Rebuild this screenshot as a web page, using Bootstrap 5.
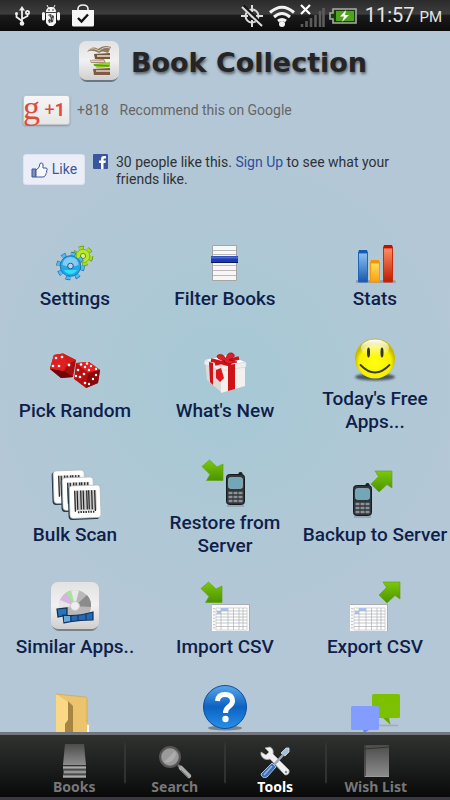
<!DOCTYPE html>
<html lang="en">
<head>
<meta charset="utf-8">
<meta name="viewport" content="width=device-width, initial-scale=1">
<title>Book Collection</title>
<link href="https://cdn.jsdelivr.net/npm/bootstrap@5.3.0/dist/css/bootstrap.min.css" rel="stylesheet">
<style>
  body { font-family: Roboto, "Liberation Sans", sans-serif; background: radial-gradient(circle at 50% 48%, #a6c8d5 0, #aec8d5 130px, #b4c7d6 250px); }
  svg { display: block; overflow: visible; flex: none; }
  .status-strip { height: 31px; padding: 0 8px 0 14px; background: linear-gradient(#2b2b2b 0, #3d3d3d 45%, #1b1b1b 50%, #0b0b0b 100%); color: #e6e6e6; }
  .notices { gap: 11px; }
  .status-time { font-size: 20px; line-height: 32px; }
  .status-time small { font-size: 15px; }
  .scroll-area { scrollbar-width: none; min-height: 0; }
  .scroll-area::-webkit-scrollbar { display: none; }
  .app-head { padding: 10px 4px 0 0; gap: 12px; }
  .app-title { padding-top: 4px; font: bold 27px/36px "DejaVu Sans", sans-serif; color: #252525; text-shadow: 1px 2px 3px #0008; }
  .social { padding: 14px 23px 0; font-size: 14px; line-height: 17px; }
  .plus-btn { width: 47px; height: 30px; border: 1px solid #c4c4c4; border-radius: 3px; background: linear-gradient(#f6f6f6, #e6e6e6); box-shadow: 0 1px 2px #0004; color: #dd4b39; font-size: 18px; line-height: 28px; }
  .plus-g { font-family: "Liberation Serif", serif; font-size: 34px; line-height: 24px; width: 19px; margin-left: -2px; }
  .grey-note { color: #666; margin-left: 7px; }
  .like-row { margin-top: 29px; gap: 8px; }
  .like-btn { width: 62px; height: 31px; border: 1px solid #dde2f0; border-radius: 3px; background: #eceef7; color: #3b5998; font-size: 14px; }
  .like-text { color: #2f3235; max-width: 282px; }
  .like-text a { color: #2f4f9c; }
  .tools-grid { margin-top: 56px; row-gap: 25px; }
  .tool { border: 0; background: none; padding: 0; gap: 5px; width: 100%; color: #0f1f4b; font-size: 19px; line-height: 23px; font-weight: 500; }
  .tabs-bar { padding: 0 25px; height: 68px; border-top: 3px solid #73777d; border-bottom: 3px solid #3b3842; background: linear-gradient(#303230, #1d1f1e 50%, #080908); }
  .tab { flex: 1 1 0; border: 0; background: none; padding: 10px 0 0; color: #777; font: bold 14px/18px "Noto Sans", sans-serif; }
  .tab + .tab { border-left: 2px solid; border-image: linear-gradient(transparent 10%, #353535 20%, #303030 75%, transparent 78%) 1; }
  .tab.active { color: #fff; }
</style>
<script src="https://cdn.jsdelivr.net/npm/bootstrap@5.3.0/dist/js/bootstrap.bundle.min.js"></script>
</head>
<body class="vh-100 d-flex flex-column overflow-hidden">

<svg width="0" height="0" class="position-absolute" aria-hidden="true">
  <defs>
    <linearGradient id="gGreen" x2="0" y2="1"><stop stop-color="#7cc80a"/><stop offset="1" stop-color="#4c9300"/></linearGradient>
    <linearGradient id="gTile" x2="0" y2="1"><stop stop-color="#e2e2e2"/><stop offset=".5" stop-color="#f1f1f1"/><stop offset="1" stop-color="#cfcfcf"/></linearGradient>
    <linearGradient id="gGrey" x2="0" y2="1"><stop stop-color="#4c4c4c"/><stop offset="1" stop-color="#8d8d8d"/></linearGradient>
    <g id="arrowDown"><path d="M0 6.500L7.500 0L15 7L21 4V20.500H4.500L8 14.500z" fill="url(#gGreen)" stroke="#5aa00c" stroke-width=".6"/></g>
    <g id="arrowUp"><path d="M4 0H21V17L16 13.500L8 21L0 13L7.500 5.500z" fill="url(#gGreen)" stroke="#5aa00c" stroke-width=".6"/></g>
    <g id="phone">
      <rect x="12.500" y="-1" width="4" height="6" rx="1.500" fill="#20262b"/>
      <rect x=".5" y="1.500" width="18" height="30" rx="3" fill="#30363a" stroke="#171b1e"/>
      <rect x="2.500" y="4.500" width="14" height="11" rx="2" fill="#71a7b7" stroke="#a3c5ce" stroke-width=".6"/>
      <path d="M2.500 20H16.500M2.500 24H16.500M2.500 28H16.500" stroke="#8b9398" stroke-width="2.600" stroke-dasharray="4 1"/>
      <path d="M1 33H18" stroke="#0003" stroke-width="1.500"/>
    </g>
    <g id="sheet">
      <path d="M0 0H38V27H0z" fill="#fafafa"/><path d="M0 .5H38M37.500 0V27" stroke="#a9adb0"/>
      <path d="M4 4H35V26H4z" fill="#fff" stroke="#b9bcc2" stroke-width=".6"/>
      <path d="M9 4H16V7H9zM5 7H9V10H5z" fill="#a3c4fa"/>
      <path d="M4 7H35M4 10H35M4 13H35M4 16H35M4 19H35M4 22.500H35M9 4V26M16 4V26M21.500 4V26M27 4V26M31 4V26" stroke="#b4b7bd" stroke-width=".8"/>
      <path d="M2 4V26" stroke="#999" stroke-dasharray="1.200 2"/>
    </g>
    <g id="barcode">
      <rect x="-1.500" y="1" width="31" height="33" rx="3.500" fill="#22394a"/>
      <rect width="31" height="32.500" rx="3" fill="#fff" stroke="#aeb4b8" stroke-width=".7"/>
      <path d="M5 5H27V25H5z" fill="#c9c9c9"/>
      <path d="M5.500 5V26M8 5V24M11.500 5V24M14 5V24M17.500 5V24M19.500 5V24M22.500 5V24M25.500 5V26" stroke="#202020" stroke-width="1.200"/>
      <path d="M8 26.500H25" stroke="#333" stroke-width="2" stroke-dasharray="1.500 1"/>
    </g>
  </defs>
</svg>

<header class="status-strip d-flex align-items-center flex-shrink-0">
  <div class="notices d-flex align-items-center">
    <svg width="16" height="20" viewBox="0 0 16 20" fill="none" stroke="#eee" stroke-width="1.800"><path d="M8 3V18M8 15L2.500 11V7M8 13L13.500 10V7"/><path d="M8 0L11 4.500H5z" fill="#eee" stroke="none"/><circle cx="8" cy="17.500" r="2.300" fill="#eee" stroke="none"/><circle cx="2.500" cy="7.500" r="1.500" fill="#eee" stroke="none"/><circle cx="13.500" cy="6.500" r="1.600"/></svg>
    <svg width="20" height="22" viewBox="0 0 20 22"><path d="M5 7C5 3.500 7 2 10 2S15 3.500 15 7zM5 8H15V18L12 21H8L5 18zM1 8.500a1.500 1.500 0 0 1 3 0V14a1.500 1.500 0 0 1-3 0zM16 8.500a1.500 1.500 0 0 1 3 0V14a1.500 1.500 0 0 1-3 0z" fill="#f4f4f4"/><path d="M6 0L7.500 3M14 0L12.500 3" stroke="#eee"/><circle cx="8" cy="5" r=".7"/><circle cx="12" cy="5" r=".7"/><path d="M7 10L9 9L13 11L12 17L8 18L7 15L10 13z" fill="#444"/><path d="M8 11H12M7 14H12M9 17H11" stroke="#ddd" stroke-dasharray="1 1"/></svg>
    <svg width="22" height="23" viewBox="0 0 22 23"><path d="M6 7V5Q6 1 11 1T16 5V7" fill="none" stroke="#eee" stroke-width="1.600"/><path d="M0 6H22V21Q22 22.500 20.500 22.500H1.500Q0 22.500 0 21z" fill="#f6f6f6"/><path d="M6 14L9.500 17.500L16 10.500" fill="none" stroke="#111" stroke-width="2.400"/></svg>
  </div>
  <svg class="ms-auto" width="24" height="24" viewBox="0 0 24 24" fill="none" stroke="#ddd" stroke-width="2"><circle cx="12" cy="12" r="6.500"/><circle cx="12" cy="12" r="1.500" fill="#ddd" stroke="none"/><path d="M12 1V8M12 16V23M1 12H8M16 12H23"/><path d="M3 2L23 22" stroke="#161616" stroke-width="4"/><path d="M2 3L22 22"/></svg>
  <svg class="ms-1" width="28" height="24" viewBox="0 0 28 24" fill="none" stroke="#f2f2f2" stroke-width="3"><path d="M2 8.500Q14-2 26 8.500M6 13Q14 6 22 13M10 17Q14 14 18 17"/><circle cx="14" cy="20" r="3" fill="#f2f2f2" stroke="none"/></svg>
  <svg class="ms-1" width="25" height="25" viewBox="0 0 25 25"><path d="M2 24V21M6.500 24V18M11 24V15M15.500 24V12M20 24V8M23.500 24V5" stroke="#5c5c5c" stroke-width="2.600"/><path d="M1 2L10 11M10 2L1 11" stroke="#fff" stroke-width="2.200"/></svg>
  <svg class="ms-1" width="28" height="16" viewBox="0 0 28 16"><path d="M4 1H27V15H4V11H1V5H4z" fill="#183d08" stroke="#aaa" stroke-width="1.600"/><path d="M7 3H25V13H7z" fill="#4fa41c"/><path d="M17 2L11 8.500H15L13 14L20 7H16z" fill="#fff"/></svg>
  <span class="status-time ms-2 text-nowrap">11:57 <small>PM</small></span>
</header>

<main class="scroll-area flex-grow-1 overflow-auto">
  <div class="app-head d-flex justify-content-center align-items-center">
    <svg width="40" height="40" viewBox="0 0 40 40"><rect x="1" y="2" width="38" height="39" rx="7" fill="#6b7780"/><rect width="40" height="39" rx="7" fill="url(#gTile)"/>
      <path d="M8 11Q13 4 19 8Q25 3 32 6L29 12Q23 9 20 12Q13 8 8 11z" fill="#8d7960"/><path d="M9 9Q14 6 20 10Q25 5 31 7" fill="none" stroke="#d9cbb5"/>
      <path d="M15 13L31 12V18L16 18z" fill="#75573e"/><path d="M18 14H31V16H18z" fill="#d3c0a6"/><path d="M11 19L25 18L27 22L12 22z" fill="#a98d78"/><path d="M12 19.500H25V21H12z" fill="#e2d2bf"/>
      <path d="M14 23L31 21V26L18 27z" fill="#8ed22a"/><path d="M15 24L30 25" stroke="#5d970d" stroke-width="1.500"/><path d="M14 28L31 27V34L15 34z" fill="#805a46"/><path d="M17 29H31V31H17z" fill="#cdb69c"/></svg>
    <h1 class="app-title mb-0">Book Collection</h1>
  </div>

  <section class="social">
    <div class="d-flex align-items-center">
      <button type="button" class="plus-btn d-flex p-0" aria-label="Google +1"><span class="plus-g">g</span><span class="ms-auto pe-1">+<b>1</b></span></button>
      <span class="grey-note">+818</span><span class="grey-note ps-1">Recommend this on Google</span>
    </div>
    <div class="like-row d-flex">
      <button type="button" class="like-btn d-flex align-items-center justify-content-center p-0 gap-1"><svg width="17" height="16" viewBox="0 0 17 16"><path d="M1 7H5V15H1z" fill="#7b8fbd" stroke="#3b5998"/><path d="M5 8Q9 6 9 1.500Q12 0 12 3V6H15.500Q17 7.500 15.500 9Q16.500 10.500 15 11.500Q15.500 13 14 13.500Q14 15 12 15H5z" fill="#f7f8fc" stroke="#3b5998"/></svg>Like</button>
      <svg width="15" height="15" viewBox="0 0 15 15"><rect width="15" height="15" rx="1" fill="#3b559f"/><path d="M8 15V9H6V6.500H8V5Q8 2 11 2H13V4.500H11.500Q10.500 4.500 10.500 5.500V6.500H13L12.500 9H10.500V15z" fill="#fff"/></svg>
      <p class="like-text m-0 flex-grow-1">30 people like this. <a href="#" class="text-decoration-none">Sign Up</a> to see what your friends like.</p>
    </div>
  </section>

  <section class="tools-grid row row-cols-3 gx-0 align-items-center">
    <div class="col pb-1"><button type="button" class="tool d-flex flex-column align-items-center">
      <svg width="48" height="38" viewBox="0 5 48 38"><g transform="translate(32 17)"><circle r="7.800" fill="none" stroke="#5d9418" stroke-width="5" stroke-dasharray="4.600 3.570"/><circle r="7.800" fill="none" stroke="#a9dc1f" stroke-width="3.600" stroke-dasharray="4 4.170"/><circle r="6.800" fill="#b8e62c" stroke="#7fb81c"/><circle r="2.600" fill="#d9f08a" stroke="#639a16"/></g>
      <g transform="translate(19.500 27)"><circle r="12" fill="none" stroke="#2170a5" stroke-width="4.500" stroke-dasharray="4.600 4.825"/><circle r="12" fill="none" stroke="#52b9ed" stroke-width="3.200" stroke-dasharray="4 5.425"/><circle r="10.300" fill="#25a6e8" stroke="#1c78b6"/><path d="M-8-1A8 8 0 0 1 8-1Q0 2-8-1z" fill="#a5d6f6" opacity=".75"/><path d="M-7 4Q0 12 7 4" fill="#2be0fa"/><circle r="2.800" fill="#bcd4df" stroke="#1d5e93"/></g></svg>
      <span>Settings</span></button></div>
    <div class="col pb-1"><button type="button" class="tool d-flex flex-column align-items-center">
      <svg width="48" height="38" viewBox="0 5 48 38"><path d="M11.500 6.500H35.500V41.500H11.500z" fill="#f7f7f7" stroke="#a5a5a5"/><path d="M12 11.500H35M12 15.500H35M12 26.500H35M12 31.500H35M12 36.500H35" stroke="#b9b9b9"/><path d="M10 17H37V24H10z" fill="#1d3bb0"/><path d="M10 18.500H37" stroke="#4a6ad0" stroke-width="2"/><path d="M10 23.500H37" stroke="#071769"/></svg>
      <span>Filter Books</span></button></div>
    <div class="col pb-1"><button type="button" class="tool d-flex flex-column align-items-center">
      <svg width="48" height="38" viewBox="0 5 48 38"><defs><linearGradient id="b1" x2="0" y2="1"><stop stop-color="#8bc2f2"/><stop offset="1" stop-color="#1a56ae"/></linearGradient><linearGradient id="b2" x2="0" y2="1"><stop stop-color="#ffdd60"/><stop offset="1" stop-color="#fc9d12"/></linearGradient><linearGradient id="b3" x2="0" y2="1"><stop stop-color="#fc8f68"/><stop offset="1" stop-color="#bd1c00"/></linearGradient></defs>
      <path d="M5 41H44L45 44H5z" fill="#74838f88"/><path d="M7.500 14H16.500V43H7.500z" fill="url(#b1)" stroke="#2264bb"/><path d="M8 11H16L17 14H7z" fill="#1659b2"/><path d="M19.500 24H28.500V43H19.500z" fill="url(#b2)" stroke="#f59a06"/><path d="M20 21H28L29 24H19z" fill="#f49400"/><path d="M32.500 9H41.500V43H32.500z" fill="url(#b3)" stroke="#cf2a08"/><path d="M33 6H41L42 9H32z" fill="#bd1300"/></svg>
      <span>Stats</span></button></div>

    <div class="col"><button type="button" class="tool d-flex flex-column align-items-center">
      <svg width="48" height="43" viewBox="0 1 48 43"><path d="M3 5L12 3.500L25 10L22 27L10 28L-1 19z" fill="#a50e0e"/><path d="M3 5L12 3.500L25 10L17 14L13 21L-1 19z" fill="#d71b1b"/><path d="M13 21L-1 19L10 28L22 27z" fill="#6f0505"/><path d="M3 5L12 4L16 13L12 21L-1 18z" fill="#e02020"/>
      <g fill="#fff"><circle cx="5" cy="8" r="1.300"/><circle cx="11" cy="7" r="1.300"/><circle cx="2" cy="16" r="1.300"/><circle cx="8" cy="16" r="1.300"/><circle cx="18" cy="15" r="1.400"/></g>
      <path d="M25 13L38 12L49 20L47 33L35 38L23 29z" fill="#b90f0f"/><path d="M25 13L38 12L49 20L37 23z" fill="#e52222"/><path d="M37 23L49 20L47 33L35 38z" fill="#8b0808"/>
      <g fill="#fff"><circle cx="30" cy="14.500" r="1.200"/><circle cx="36" cy="13.500" r="1.200"/><circle cx="34" cy="17" r="1.200"/><circle cx="40" cy="16" r="1.200"/><circle cx="38" cy="20" r="1.200"/><circle cx="45" cy="19" r="1.200"/><circle cx="27" cy="20" r="1.300"/><circle cx="33" cy="24" r="1.300"/><circle cx="29" cy="27" r="1.300"/><circle cx="25" cy="26" r="1.200"/><circle cx="34" cy="33" r="1.300"/><circle cx="45" cy="25" r="1.200"/><circle cx="42" cy="29" r="1.200"/><circle cx="38" cy="34" r="1.200"/></g></svg>
      <span>Pick Random</span></button></div>
    <div class="col"><button type="button" class="tool d-flex flex-column align-items-center">
      <svg width="48" height="43" viewBox="0 -1 48 43"><path d="M4 8L20 14V40L6 28z" fill="#dedad8"/><path d="M20 14L44 10V34L20 41z" fill="#f3f0ee"/><path d="M4 8L27 3L44 10L20 15z" fill="#fff"/><path d="M4 8L20 14V19L3 12zM20 14L45 10V15L20 19z" fill="#eee" stroke="#ccc" stroke-width=".5"/>
      <path d="M8 10L12 11V33L9 30zM27 13L34 12V37L27 39z" fill="#d01218"/><path d="M10 8L30 13M38 6L14 12" stroke="#d01218" stroke-width="3.500"/><path d="M24 9Q13 6 17 3Q22 1 25 7Q26 0 31 1Q37 4 28 8L36 10L28 12L23 10z" fill="#e02026" stroke="#8f080c" stroke-width=".7"/><path d="M15 18L20 16L23 26L19 30L15 26z" fill="#df171d"/></svg>
      <span>What's New</span></button></div>
    <div class="col"><button type="button" class="tool d-flex flex-column align-items-center">
      <svg width="48" height="43" viewBox="0 1 48 43"><defs><radialGradient id="smile" cy=".6"><stop stop-color="#ffff10"/><stop offset=".8" stop-color="#f8f000"/><stop offset="1" stop-color="#c9bb00"/></radialGradient><linearGradient id="shine" x2="0" y2="1"><stop stop-color="#fff"/><stop offset="1" stop-color="#fff0"/></linearGradient><filter id="soft"><feGaussianBlur stdDeviation="1.200"/></filter></defs>
      <ellipse cx="24" cy="39" rx="20" ry="3.500" fill="#4a5660" filter="url(#soft)"/><circle cx="24" cy="20.500" r="20" fill="url(#smile)"/><ellipse cx="24" cy="10" rx="14" ry="8.500" fill="url(#shine)"/><ellipse cx="17.500" cy="14.500" rx="1.500" ry="5" fill="#333"/><ellipse cx="31" cy="14.500" rx="1.500" ry="5" fill="#333"/><path d="M9.500 27Q24 42 38.500 27" fill="none" stroke="#3a3a22" stroke-width="1.800" stroke-linecap="round"/></svg>
      <span>Today's Free Apps...</span></button></div>

    <div class="col"><button type="button" class="tool d-flex flex-column align-items-center">
      <svg width="48" height="48" viewBox="0 -2 48 48"><use href="#barcode" transform="translate(2 -1) rotate(-2)"/><use href="#barcode" transform="translate(11 6) rotate(-2)"/><use href="#barcode" transform="translate(18 14) rotate(-2)"/></svg>
      <span>Bulk Scan</span></button></div>
    <div class="col"><button type="button" class="tool d-flex flex-column align-items-center">
      <svg width="48" height="48" viewBox="0 -2 48 48"><use href="#arrowDown" x="1"/><use href="#phone" x="25" y="13"/></svg>
      <span>Restore from Server</span></button></div>
    <div class="col"><button type="button" class="tool d-flex flex-column align-items-center">
      <svg width="48" height="48" viewBox="0 -2 48 48"><use href="#phone" x="2" y="12"/><use href="#arrowUp" x="20" y="-1"/></svg>
      <span class="text-nowrap">Backup to Server</span></button></div>

    <div class="col"><button type="button" class="tool d-flex flex-column align-items-center">
      <svg width="48" height="48" viewBox="0 0 48 48"><rect x="1" y="2" width="46" height="47" rx="7" fill="#77828a"/><rect width="48" height="47" rx="7" fill="url(#gTile)"/><circle cx="24" cy="24" r="16" fill="#b8b8b8"/><path d="M24 24L9 18A16 16 0 0 1 15 11z" fill="#d8b5e0"/><path d="M24 24L15 11A16 16 0 0 1 20 8.500z" fill="#a8e39a"/><path d="M24 24L20 8.500A16 16 0 0 1 28 8.500z" fill="#e8e8e8"/><path d="M24 24L36 13A16 16 0 0 1 40 25z" fill="#8b8b8b"/><path d="M24 24L8 26A16 16 0 0 1 9 18z" fill="#e6e6e6"/><circle cx="24" cy="24" r="4.500" fill="#eee" stroke="#ccc"/>
      <path d="M6 27L16 26V33L7 35z" fill="#2775b8" stroke="#102c50" stroke-width="1.200"/><path d="M12 33Q25 35 42 30V38Q25 38 13 41z" fill="#2469b5" stroke="#10315c" stroke-width="1.200"/><path d="M20 34V40M27 33V39M35 32V38" stroke="#10315c"/><path d="M13 34H19V39L13 40z" fill="#65a9dc"/></svg>
      <span>Similar Apps..</span></button></div>
    <div class="col"><button type="button" class="tool d-flex flex-column align-items-center">
      <svg width="48" height="48" viewBox="0 0 48 48"><use href="#arrowDown"/><use href="#sheet" x="11" y="22"/></svg>
      <span>Import CSV</span></button></div>
    <div class="col"><button type="button" class="tool d-flex flex-column align-items-center">
      <svg width="48" height="48" viewBox="0 0 48 48"><use href="#arrowUp" x="28"/><use href="#sheet" x="-1" y="22"/></svg>
      <span>Export CSV</span></button></div>

    <div class="col"><button type="button" class="tool d-flex flex-column align-items-center">
      <svg width="48" height="48" viewBox="0 1 48 48"><path d="M5 12L34 15Q36 15 36 17V41L39 42V50H5z" fill="#ebc46d"/><path d="M5 12L17 20V38L14 42V52H5z" fill="#f9d985"/><path d="M17 19L22 24V50H14V42L17 38z" fill="#a88443"/><path d="M36 43H38V50H36z" fill="#fff"/><path d="M5 12L34 15Q36 15 36 17V41" fill="none" stroke="#d1a850" stroke-width=".8"/></svg>
    </button></div>
    <div class="col"><button type="button" class="tool d-flex flex-column align-items-center">
      <svg width="48" height="48" viewBox="0 1 48 48"><defs><linearGradient id="help" x2="0" y2="1"><stop stop-color="#5aa6ec"/><stop offset=".5" stop-color="#0c62c0"/><stop offset="1" stop-color="#2791ea"/></linearGradient></defs><ellipse cx="24" cy="46" rx="17" ry="2.500" fill="#0005"/><circle cx="24" cy="25" r="21.500" fill="url(#help)" stroke="#0b4f9f"/><path d="M16.500 19Q17 12.500 24 12.500Q31.500 12.500 31.500 19Q31.500 22 28 24.500Q24.500 27 24.500 31" fill="none" stroke="#fff" stroke-width="5"/><circle cx="24.500" cy="37" r="3.200" fill="#fff"/></svg>
    </button></div>
    <div class="col"><button type="button" class="tool d-flex flex-column align-items-center">
      <svg width="48" height="48" viewBox="0 1 48 48"><path d="M28 43.500H47" stroke="#0002" stroke-width="1.500"/><rect x="21" y="12" width="28" height="24" rx="1.500" fill="#7cc000"/><path d="M32 36H38L39.500 43z" fill="#69a800"/><rect x="0" y="24" width="28" height="24" rx="1.500" fill="#839cff"/><path d="M12 48H18L13 51z" fill="#6583ef"/></svg>
    </button></div>
  </section>
</main>

<nav class="tabs-bar d-flex flex-shrink-0">
  <button type="button" class="tab d-flex flex-column align-items-center">
    <svg width="32" height="33" viewBox="0 0 32 33"><path d="M7 -1H26L28 20H5z" fill="url(#gGrey)"/><path d="M5 20.500H28V33H5z" fill="#4a4a4a"/><path d="M5 21H28V24H5zM6 25.500H28V28.500H6zM5 30H28V33H5z" fill="#808080"/><path d="M5 22.500H28M6 27H28M5 31.500H28" stroke="#aaa"/></svg>
    Books</button>
  <button type="button" class="tab d-flex flex-column align-items-center">
    <svg width="32" height="33" viewBox="0 0 32 33"><path d="M19 20L23 24" stroke="#777" stroke-width="2.500"/><path d="M22 23L30 31" stroke="#aaa" stroke-width="4.500" stroke-linecap="round"/><path d="M22 25L29 32" stroke="#777"/><circle cx="11" cy="12" r="10" fill="#777" stroke="#555" stroke-width="2"/><circle cx="11" cy="12" r="8.500" fill="#9a9a9a"/><path d="M5 17L16 6A8.500 8.500 0 0 1 5 17z" fill="#bbb" opacity=".6"/></svg>
    Search</button>
  <button type="button" class="tab active d-flex flex-column align-items-center" aria-current="page">
    <svg width="32" height="33" viewBox="0 1 32 33"><path d="M6 4L11 3Q15 5 14 10L30 26Q31 31 26 31L11 15Q5 17 2 11L2 8L7 11L10 8z" fill="#f0f0f0" stroke="#aaa" stroke-width=".8"/><circle cx="27" cy="28" r="1.200" fill="#888"/><path d="M24 11L13 23" stroke="#9da9b5" stroke-width="2.500"/><path d="M22 9L27 4L30 4L30 8L26 12z" fill="#a8bfd4" stroke="#dce7f0" stroke-width=".8"/><path d="M13 19L17 23L8 33Q3 35 2 30z" fill="#3d6fb5" stroke="#a2c2e6" stroke-width="1"/><path d="M13 22L5 31" stroke="#92b5df" stroke-width="1.500"/></svg>
    Tools</button>
  <button type="button" class="tab d-flex flex-column align-items-center">
    <svg width="32" height="33" viewBox="0 0 32 33"><path d="M4 0H29V32H4z" fill="url(#gGrey)"/><path d="M4 4L29 2M5 0V32" stroke="#333" stroke-width="1.200"/><path d="M5 31.500H29" stroke="#999"/></svg>
    Wish List</button>
</nav>
</body>
</html>
